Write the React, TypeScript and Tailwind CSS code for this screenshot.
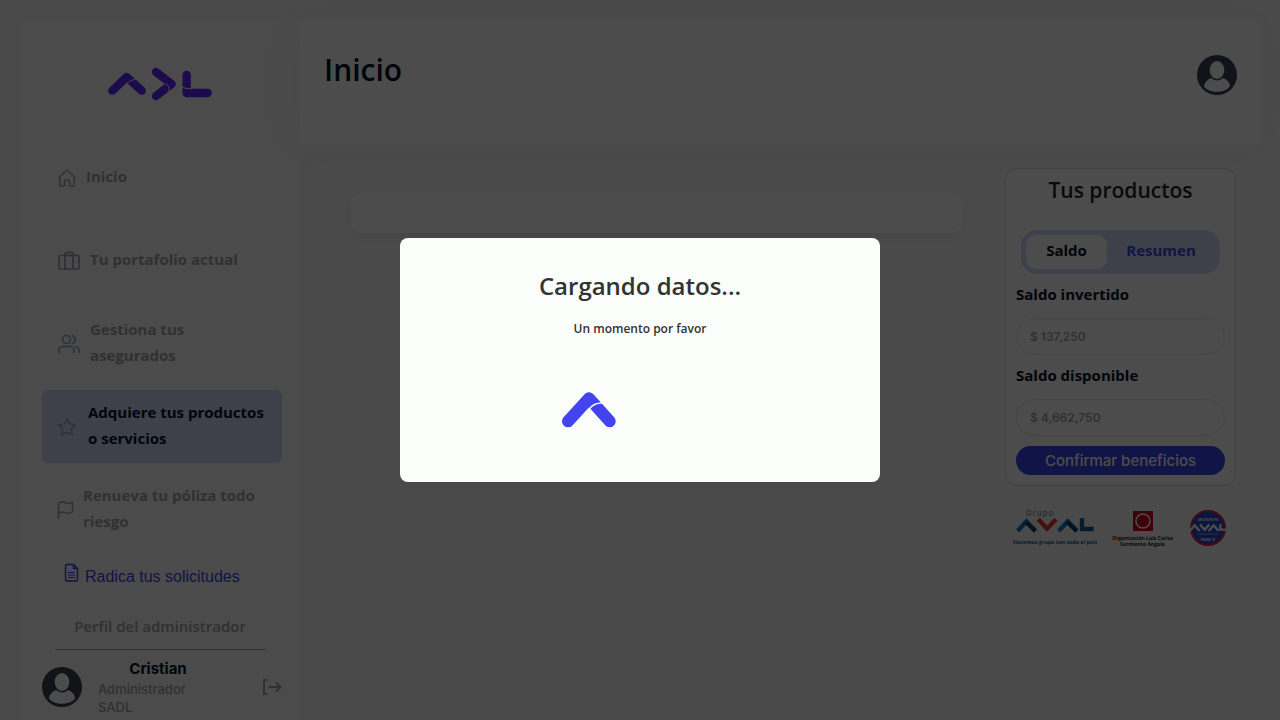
import type { ReactNode } from "react";

const display = "font-['Open_Sans','Noto_Sans',sans-serif]";
const geometric = "font-['Inter','Open_Sans',sans-serif]";

function AdlLogo() {
  return (
    <svg viewBox="54 36 312 102" className="h-[34px] w-[104px]" fill="none" strokeLinecap="round" strokeLinejoin="round" aria-label="ADL" role="img">
      <g stroke="#6024ff" strokeWidth="25">
        <path d="M67 107 110 66 155 107" />
        <path d="M198 51 245 87 198 123" />
        <path d="M290 60V114H353" />
      </g>
      <g stroke="#fafafa" strokeWidth="3">
        <path d="M112 84Q120 74 136 73" />
        <path d="M227 86Q240 92 236 108" />
        <path d="M274 93Q280 102 306 101" />
      </g>
    </svg>
  );
}

function Avatar() {
  return (
    <svg viewBox="0 0 120 120" className="size-10 shrink-0" aria-label="Usuario" role="img">
      <circle cx="60" cy="60" r="60" fill="#374151" />
      <ellipse cx="60" cy="45" rx="22" ry="27" fill="#fdfdfd" />
      <path d="M43 69C52 79 70 79 78 69C88 72 99 83 99 94C86 116 34 116 21 94C22 83 33 72 43 69Z" fill="#fdfdfd" />
    </svg>
  );
}

function Icon({ children, className = "size-6" }: { children: ReactNode; className?: string }) {
  return (
    <svg viewBox="0 0 24 24" className={`shrink-0 ${className}`} fill="none" stroke="currentColor" strokeWidth="1.700" strokeLinecap="round" strokeLinejoin="round" aria-hidden="true">
      {children}
    </svg>
  );
}

const items = [
  {
    label: "Inicio",
    gap: "gap-[9px]",
    icon: (
      <Icon className="size-5">
        <path d="M2 12 12 2.500 22 12M3.500 10.500V21.500H9V17a3 3 0 0 1 6 0v4.500H20.500V10.500" />
      </Icon>
    ),
  },
  {
    label: "Tu portafolio actual",
    gap: "gap-[9px]",
    icon: (
      <Icon>
        <rect x="2" y="6.500" width="20" height="13.500" rx="1.500" />
        <path d="M8 20V5a1.500 1.500 0 0 1 1.500-1.500h5A1.500 1.500 0 0 1 16 5v15M8 6.500h8" />
      </Icon>
    ),
  },
  {
    label: "Gestiona tus asegurados",
    gap: "gap-[9px]",
    icon: (
      <Icon>
        <circle cx="9.500" cy="7.500" r="4" />
        <path d="M2 20.500V18.500a4 4 0 0 1 4-4h7a4 4 0 0 1 4 4v2M15.500 3.700a4 4 0 0 1 0 7.600M19 14.700a4 4 0 0 1 3 3.800v2" />
      </Icon>
    ),
  },
  {
    label: "Adquiere tus productos o servicios",
    gap: "gap-[11px]",
    active: true,
    icon: (
      <Icon className="size-5">
        <path d="m12 1.800 3 6.500 7.200.900-5.200 5 1.400 7.200L12 18.300l-6.400 3.100L7 14.200l-5.200-5L9 8.300Z" />
      </Icon>
    ),
  },
  {
    label: "Renueva tu póliza todo riesgo",
    gap: "gap-[9px]",
    icon: (
      <svg viewBox="0 0 17 20" className="h-5 w-[17px] shrink-0" fill="none" stroke="currentColor" strokeWidth="1.500" strokeLinejoin="round" strokeLinecap="round" aria-hidden="true">
        <path d="M1.500 18V3.500C4.500 .500 7.500 2.200 9 3C11.500 4 13.500 3.600 15.500 2.300V12C12.500 14 10.500 13.500 8.500 12.600C6 11.500 4 11.500 1.500 13" />
      </svg>
    ),
  },
];

function Sidebar() {
  return (
    <aside className="flex w-[280px] shrink-0 flex-col bg-[#fafafa] pr-[18px] pb-6 pl-[22px] shadow-[0_0_20px_rgba(0,0,0,0.03)]">
      <div className="flex justify-center pt-[47px] pr-1 pb-10">
        <AdlLogo />
      </div>
      <nav className="flex flex-col gap-2.5">
        {items.map((item) => (
          <a
            key={item.label}
            href="#"
            className={`flex h-[73px] items-center rounded-md pr-[18px] pl-[15px] text-[15px] leading-[26px] font-bold ${item.gap} ${display} ${
              item.active ? "bg-[#cfd9f3] text-[#001026]" : "text-[#9ca3af]"
            }`}
          >
            <span className="text-[#9ca3af]">{item.icon}</span>
            <span className="pb-[3px]">{item.label}</span>
          </a>
        ))}
      </nav>
      <a href="#" className="mt-[17px] flex items-center gap-1.5 pl-[22px] font-['Liberation_Sans',Arial,sans-serif] text-base leading-6 text-[#3c43e8]">
        <svg viewBox="0 0 15 20" className="mb-2 h-5 w-[15px]" fill="none" stroke="currentColor" strokeWidth="1.400" strokeLinejoin="round" aria-hidden="true">
          <path d="M3 1.500H9.500L13.500 5.500V16.500Q13.500 18 12 18H3Q1.500 18 1.500 16.500V3Q1.500 1.500 3 1.500ZM9.500 1.500V5.500H13.500" />
          <path d="M4 9.500H11M4 12H11M4 14.500H11" strokeWidth="1" />
        </svg>
        Radica tus solicitudes
      </a>
      <p className={`mt-[22px] pr-1 text-center text-[15px] leading-[26px] font-semibold text-[#9ca3af] ${display}`}>Perfil del administrador</p>
      <hr className="mt-2.5 mr-4 ml-[13px] border-[#9ca3af]" />
      <div className="mt-2 flex items-center gap-4">
        <Avatar />
        <div className="w-[120px]">
          <p className={`text-center text-[15px] leading-[22px] font-bold text-[#001026] ${geometric}`}>Cristian</p>
          <p className={`w-[100px] text-[13px] leading-[18px] font-medium text-[#9ca3af] ${geometric}`}>Administrador SADL</p>
        </div>
        <button type="button" aria-label="Cerrar sesión" className="ml-auto text-[#9ca3af]">
          <svg viewBox="0 0 20 18" className="h-[18px] w-5" fill="none" stroke="currentColor" strokeWidth="2" aria-hidden="true">
            <path d="M5.500 2H2V16H5.500M7 9H18M14 4.500 18.500 9 14 13.500" />
          </svg>
        </button>
      </div>
    </aside>
  );
}

function GrupoAval() {
  return (
    <svg viewBox="0 0 252 114" className="h-[38px] w-[84px]" aria-label="Grupo Aval" role="img">
      <text x="38" y="21" fontSize="23" letterSpacing="4" fill="#5c6f86" fontFamily="Inter, sans-serif">Grupo</text>
      <g fill="none" strokeWidth="13">
        <path d="M14 66 40 37 68 66" stroke="#1479b8" />
        <path d="m39 39 28 27" stroke="#123b70" />
        <path d="M76 31 102 59 129 31" stroke="#e5361f" />
        <path d="M137 66 164 37 192 66" stroke="#1479b8" />
        <path d="m163 39 28 27" stroke="#123b70" />
        <path d="M207 28V60H242" stroke="#145a94" />
      </g>
      <text x="0" y="106" fontSize="16" fontWeight="700" fill="#1a5b99" fontFamily="Open Sans, sans-serif">Hacemos grupo con todo el país</text>
    </svg>
  );
}

function Organizacion() {
  return (
    <div className="flex w-[60px] flex-col items-center">
      <svg viewBox="0 0 20 20" className="size-5" aria-hidden="true">
        <rect width="20" height="20" fill="#d3001d" />
        <circle cx="10" cy="10" r="7" fill="none" stroke="#fff" strokeWidth="1.600" />
      </svg>
      <p className={`mt-1 text-center text-[5px] leading-[6px] font-bold whitespace-nowrap text-[#1c1c1c] ${display}`}>
        Organización Luis Carlos
        <br />
        Sarmiento Angulo
      </p>
    </div>
  );
}

function AvalSeal() {
  return (
    <svg viewBox="0 0 120 114" className="h-[38px] w-10" aria-label="Aval" role="img">
      <circle cx="60" cy="57" r="51" fill="#2848d0" stroke="#dc2038" strokeWidth="6" />
      <text x="60" y="35" textAnchor="middle" fontSize="9" fontWeight="700" fill="#fff" fontFamily="Inter, sans-serif">UN GRUPO ES</text>
      <g fill="none" stroke="#fff" strokeWidth="7">
        <path d="M5 66 20 49 35 66" />
        <path d="M36 47 50 62 64 47" />
        <path d="M62 66 77 49 92 66" />
        <path d="M97 46V62H117" />
      </g>
      <path d="M29 75H92" stroke="#fff" strokeWidth="2" strokeDasharray="5 2" />
      <text x="60" y="97" textAnchor="middle" fontSize="11" fontWeight="700" fill="#fff" fontFamily="Inter, sans-serif">PARA TI</text>
    </svg>
  );
}

function Amount({ id, label, value }: { id: string; label: string; value: string }) {
  return (
    <div>
      <label htmlFor={id} className={`block text-[15px] leading-6 font-bold text-[#001026] ${display}`}>
        {label}
      </label>
      <input
        id={id}
        readOnly
        value={value}
        className={`mt-3 block h-[37px] w-full rounded-full border border-[#e5e7eb] bg-transparent px-[13px] text-xs font-semibold text-[#9ca3af] outline-none ${geometric}`}
      />
    </div>
  );
}

function Products() {
  return (
    <div className="w-[231px] shrink-0">
      <section className="rounded-xl border border-[#d1d5db] bg-[#fdfefd] p-2.5">
        <h2 className={`-mt-1 text-center text-[21px] leading-[30px] font-semibold text-[#222] ${display}`}>Tus productos</h2>
        <div className={`mx-[5px] mt-[25px] flex rounded-2xl bg-[#cfd9f3] p-[5px] text-[15px] font-bold ${display}`}>
          <button type="button" className="h-[34px] w-[81px] rounded-[10px] bg-white pb-1 text-[#001026]">
            Saldo
          </button>
          <button type="button" className="h-[34px] flex-1 pb-1 text-[#3c43e8]">
            Resumen
          </button>
        </div>
        <div className="mt-2 flex flex-col gap-2">
          <Amount id="invertido" label="Saldo invertido" value="$ 137,250" />
          <Amount id="disponible" label="Saldo disponible" value="$ 4,662,750" />
        </div>
        <button type="button" className={`mt-2.5 block w-full rounded-full bg-[#3643ea] text-[15px] leading-[29px] font-medium text-white ${geometric}`}>
          Confirmar beneficios
        </button>
      </section>
      <div className="mt-[23px] flex items-start justify-between px-2">
        <GrupoAval />
        <div className="pt-0.5">
          <Organizacion />
        </div>
        <AvalSeal />
      </div>
    </div>
  );
}

function LoadingDialog() {
  return (
    <div className="fixed inset-0 flex items-center justify-center bg-black/70">
      <div role="dialog" aria-modal="true" aria-labelledby="loading-title" className={`flex w-[480px] max-w-full flex-col items-center rounded-lg bg-[#fafdf9] pt-7 pb-[46px] text-[#333] ${display}`}>
        <h2 id="loading-title" className="text-2xl leading-10 font-semibold">
          Cargando datos...
        </h2>
        <p className="mt-3 text-xs leading-[22px] font-semibold">Un momento por favor</p>
        <svg viewBox="0 0 480 156" className="mt-11 h-[52px] w-40" fill="none" strokeLinecap="round" strokeLinejoin="round" aria-hidden="true">
          <path d="M24 112 87 43 149 112" stroke="#4343ef" strokeWidth="36" />
          <path d="M88 75Q101 56 128 57" stroke="#fafdf9" strokeWidth="4" />
        </svg>
      </div>
    </div>
  );
}

export default function App() {
  return (
    <div className="h-screen overflow-hidden bg-[#f8f8f8] p-5">
      <div className="flex min-h-full">
        <Sidebar />
        <main className="min-w-0 flex-1">
          <header className="flex h-[125px] items-start justify-between bg-[#fdfdfd] pt-[35px] pr-[23px] pl-6 shadow-[0_0_50px_rgba(0,0,0,0.04)]">
            <h1 className={`text-[30px] leading-[30px] font-semibold text-[#001026] ${display}`}>Inicio</h1>
            <Avatar />
          </header>
          <div className="flex items-start gap-[42px] pt-[23px] pr-6 pl-[50px]">
            <section className="mt-[25px] h-10 flex-1 rounded-xl bg-[#fdfdfd] shadow-[0_4px_8px_rgba(0,0,0,0.07)]" />
            <Products />
          </div>
        </main>
      </div>
      <LoadingDialog />
    </div>
  );
}
